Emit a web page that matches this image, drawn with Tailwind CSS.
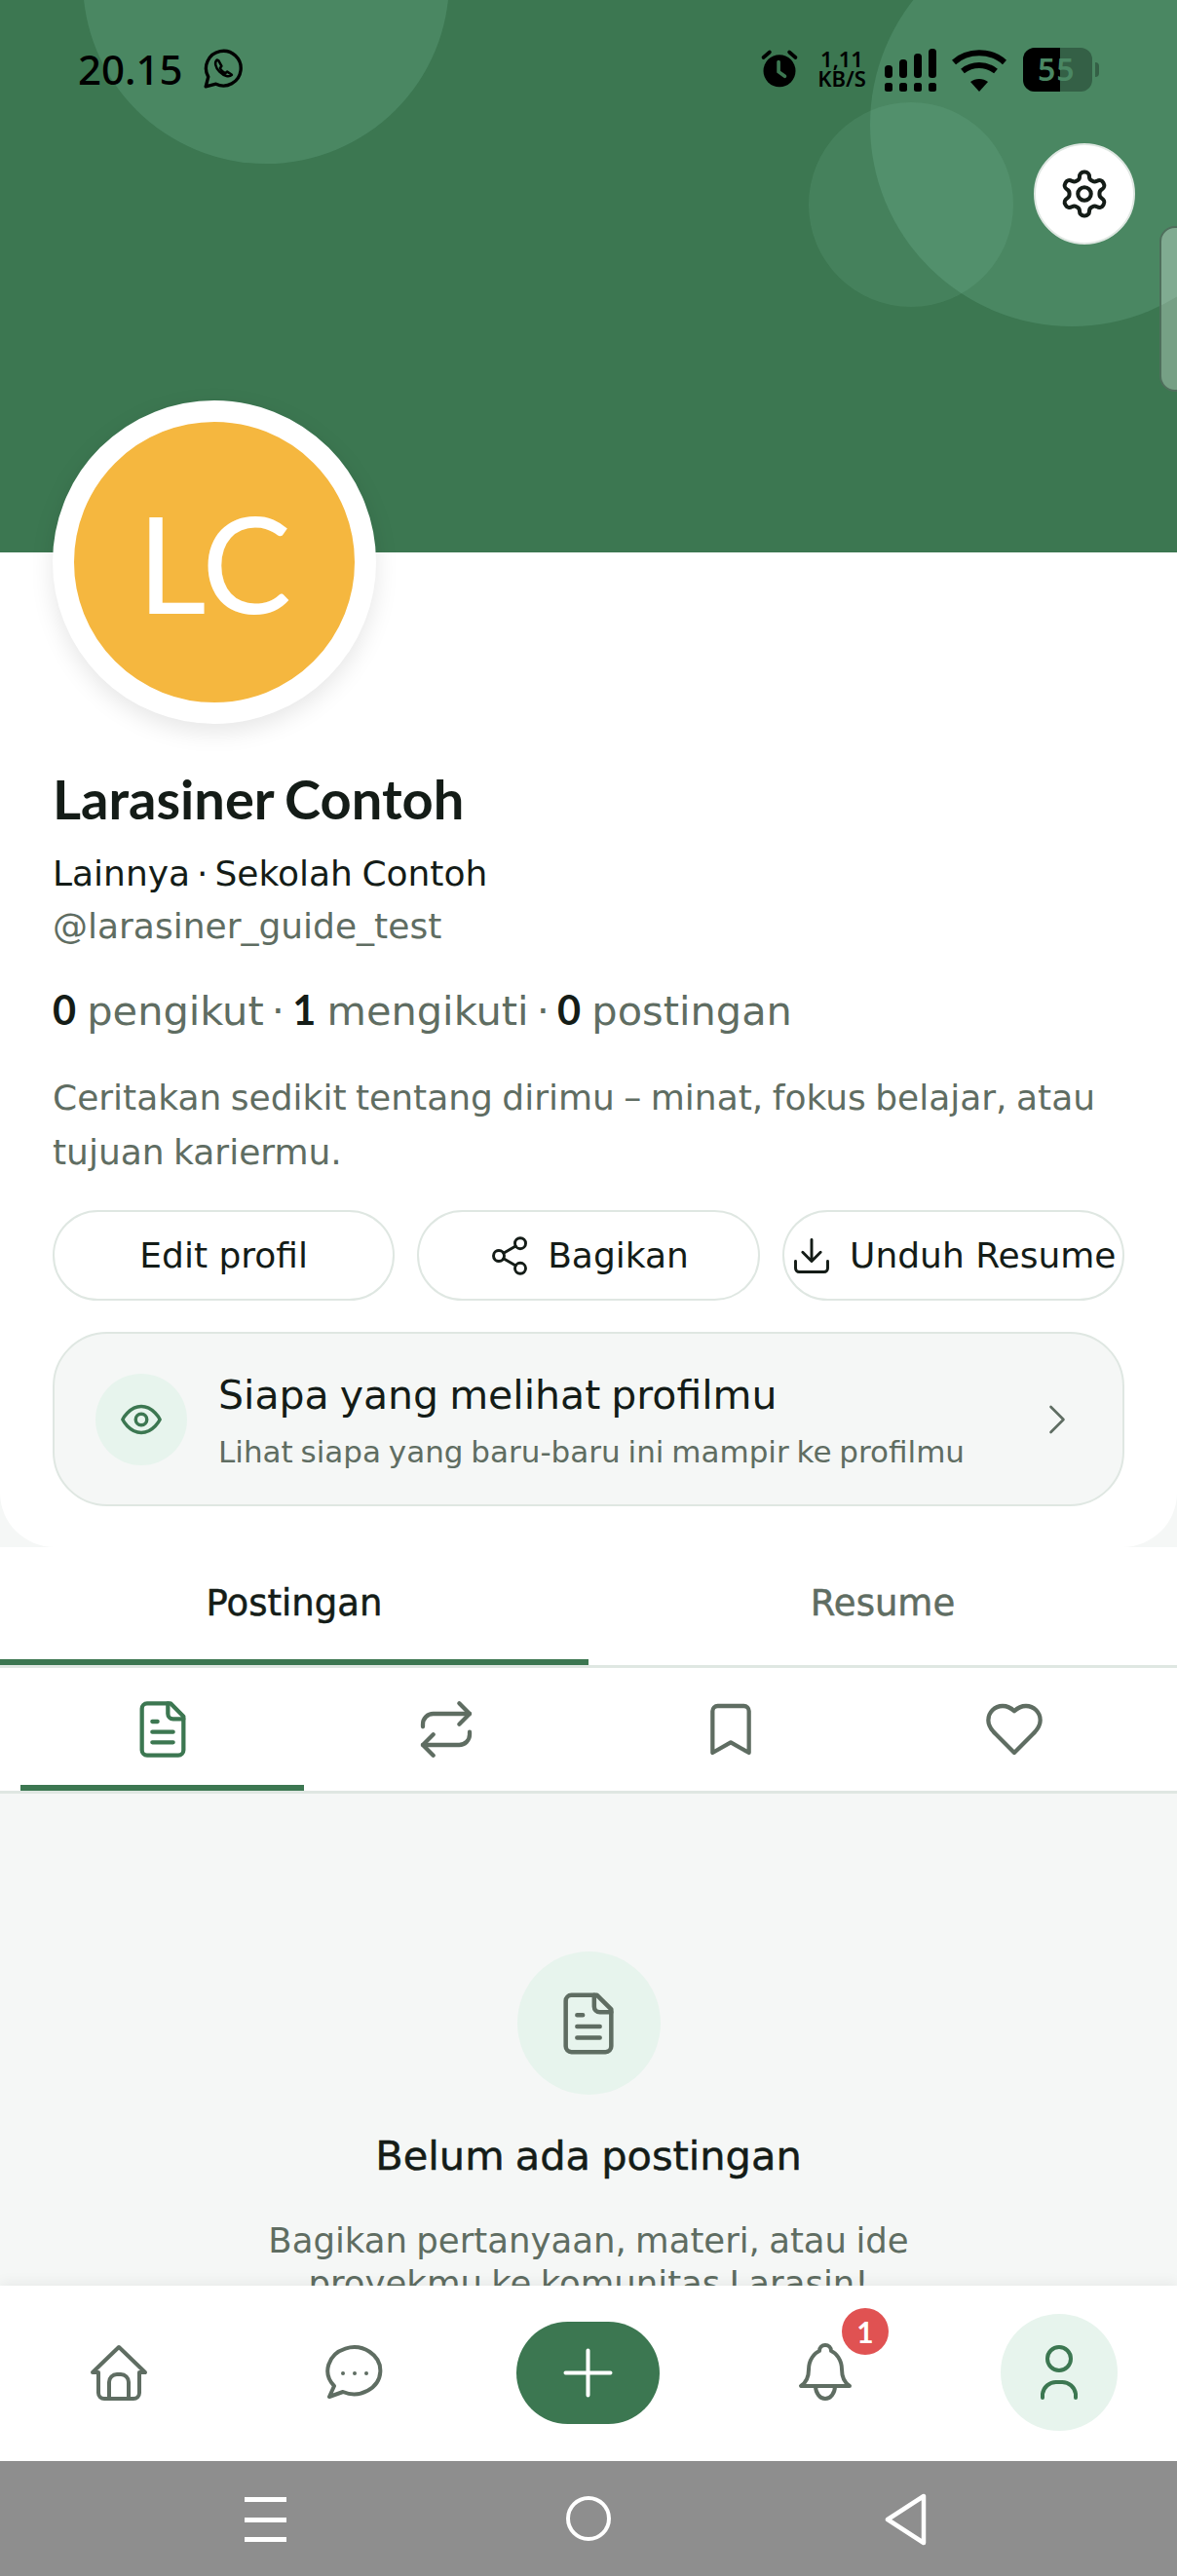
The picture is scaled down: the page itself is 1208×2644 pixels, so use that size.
<!doctype html>
<html lang="id"><head><meta charset="utf-8"><script src="https://cdn.jsdelivr.net/npm/@tailwindcss/browser@4"></script></head>
<body class="m-0">
<div class="relative flex h-[2644px] w-[1208px] flex-col overflow-hidden bg-[#f5f7f6] font-['DejaVu_Sans',sans-serif] text-[#141c17] [word-spacing:-2px]">
  <header class="relative h-[567px] shrink-0 overflow-hidden bg-[#3c7751]">
    <div class="absolute left-[85px] top-[-208px] size-[376px] rounded-full bg-[#99e2c9]/[0.15]"></div>
    <div class="absolute left-[893px] top-[-79px] size-[414px] rounded-full bg-[#99e2c9]/[0.15]"></div>
    <div class="absolute left-[830px] top-[105px] size-[210px] rounded-full bg-[#99e2c9]/[0.10]"></div>
    <div class="absolute left-[1190px] top-[232px] h-[170px] w-[40px] rounded-l-[16px] border-2 border-[#4f6f5c] bg-white/30"></div>
    <div class="absolute left-[80px] right-0 top-[46px] flex h-[50px] items-center text-black">
      <span class="font-['Noto_Sans',sans-serif] text-[42px] font-medium leading-[50px]">20.15</span>
      <svg class="ml-[20px] size-[42px]" viewBox="0 0 40 40" fill="none" stroke="#000" stroke-width="3.200" stroke-linecap="round" stroke-linejoin="round"><path d="M3 37l2.500-9.500A17 17 0 1 1 13 34.500z"/><path d="M14 11c-2.500 2-2 7 2.500 11.500S26 28 28.500 25.500l-4.500-3-2 1.500c-2-1-4-3-5-5l1.500-2-3-5.500z" stroke-width="2.400"/></svg>
      <svg class="absolute left-[698px] top-[2px] size-[44px]" viewBox="0 0 24 24"><circle cx="12" cy="13.500" r="9" fill="#000"/><path d="M3 6l3.500-3M21 6l-3.500-3" stroke="#000" stroke-width="2" stroke-linecap="round"/><path d="M11.500 8.500v5.500l3.500 2.500" stroke="#3c7751" stroke-width="2" fill="none" stroke-linecap="round"/></svg>
      <div class="absolute left-[752px] top-[4px] w-[64px] text-center font-['Noto_Sans',sans-serif] text-[22px] font-semibold leading-[20px]">1,11<br>KB/S</div>
      <svg class="absolute left-[828px] top-[4px] h-[44px] w-[54px]" viewBox="0 0 54 44" fill="#000"><rect x="0" y="17" width="8" height="13" rx="3.500"/><rect x="15" y="11" width="8" height="19" rx="3.500"/><rect x="30" y="5" width="8" height="25" rx="3.500"/><rect x="45" y="0" width="8" height="30" rx="3.500"/><rect x="0" y="35" width="8" height="9" rx="2.500"/><rect x="15" y="35" width="8" height="9" rx="2.500"/><rect x="30" y="35" width="8" height="9" rx="2.500"/><rect x="45" y="35" width="8" height="9" rx="2.500"/></svg>
      <svg class="absolute left-[897px] top-[4px] h-[44px] w-[56px]" viewBox="0 0 56 44" fill="none" stroke="#000" stroke-width="6"><path d="M2 14C16 1 40 1 54 14"/><path d="M11 23c10-8 24-8 34 0"/><path d="M28 44l-9-10c5-4 13-4 18 0z" fill="#000" stroke="none"/></svg>
      <div class="absolute left-[970px] top-[3px] flex h-[45px] w-[71px] overflow-hidden rounded-[12px] bg-[#346046]">
        <div class="h-full w-[38px] bg-black"></div>
        <span class="absolute left-[15px] top-[-1px] font-['Noto_Sans',sans-serif] text-[32px] font-semibold leading-[45px] text-[#4a8763] tracking-[1px]">55</span>
      </div>
      <div class="absolute left-[1044px] top-[18px] h-[15px] w-[4px] rounded-r-full bg-[#346046]"></div>
    </div>
    <button class="absolute left-[1061px] top-[147px] flex size-[104px] items-center justify-center rounded-full border-2 border-[#dfe7e2] bg-white">
      <svg class="size-[54px]" viewBox="0 0 24 24" fill="none" stroke="#141c17" stroke-width="1.800" stroke-linecap="round" stroke-linejoin="round"><path d="M12.220 2h-.44a2 2 0 0 0-2 2v.18a2 2 0 0 1-1 1.730l-.43.25a2 2 0 0 1-2 0l-.15-.08a2 2 0 0 0-2.730.73l-.22.38a2 2 0 0 0 .73 2.730l.15.100a2 2 0 0 1 1 1.720v.51a2 2 0 0 1-1 1.740l-.15.090a2 2 0 0 0-.73 2.730l.22.38a2 2 0 0 0 2.730.73l.15-.08a2 2 0 0 1 2 0l.43.25a2 2 0 0 1 1 1.730V20a2 2 0 0 0 2 2h.44a2 2 0 0 0 2-2v-.18a2 2 0 0 1 1-1.730l.43-.25a2 2 0 0 1 2 0l.15.080a2 2 0 0 0 2.730-.73l.22-.39a2 2 0 0 0-.73-2.730l-.15-.08a2 2 0 0 1-1-1.740v-.5a2 2 0 0 1 1-1.740l.15-.09a2 2 0 0 0 .73-2.730l-.22-.38a2 2 0 0 0-2.730-.73l-.15.08a2 2 0 0 1-2 0l-.43-.25a2 2 0 0 1-1-1.730V4a2 2 0 0 0-2-2z"/><circle cx="12" cy="12" r="3"/></svg>
    </button>
  </header>

  <section class="relative h-[1021px] shrink-0 rounded-b-[56px] bg-white px-[54px]">
    <div class="absolute left-[54px] top-[-156px] flex size-[332px] items-center justify-center rounded-full border-[22px] border-white bg-[#f5b73f] shadow-[0_8px_24px_rgba(0,0,0,0.10)]">
      <span class="font-['Lato',sans-serif] text-[138px] leading-none text-white">LC</span>
    </div>
    <div class="pt-[223px]">
      <h1 class="font-['Lato',sans-serif] text-[56px] font-bold leading-[60px]">Larasiner Contoh</h1>
      <p class="mt-[21px] text-[36px] leading-[52px]">Lainnya<span class="[word-spacing:-4.500px]"> · </span>Sekolah Contoh</p>
      <p class="mt-[2px] text-[36px] leading-[52px] text-[#5f6d62]">@larasiner_guide_test</p>
      <p class="mt-[31px] text-[41.500px] leading-[56px] text-[#5f6d62]"><b class="font-['Lato',sans-serif] text-[#141c17]">0</b> pengikut<span class="[word-spacing:-5px]"> · </span><b class="font-['Lato',sans-serif] text-[#141c17]">1</b> mengikuti<span class="[word-spacing:-5px]"> · </span><b class="font-['Lato',sans-serif] text-[#141c17]">0</b> postingan</p>
      <p class="mt-[33px] text-[36px] leading-[56px] text-[#5f6d62]">Ceritakan sedikit tentang dirimu – minat, fokus belajar, atau tujuan kariermu.</p>
    </div>
    <div class="mt-[31px] flex gap-[23px]">
      <button class="flex h-[93px] w-[352px] items-center justify-center rounded-full border-2 border-[#dfe7e2] text-[36px]">Edit profil</button>
      <button class="flex h-[93px] w-[352px] items-center justify-center gap-[17px] rounded-full border-2 border-[#dfe7e2] text-[36px]">
        <svg class="size-[44px]" viewBox="0 0 24 24" fill="none" stroke="#141c17" stroke-width="1.600" stroke-linecap="round"><circle cx="18" cy="5" r="3"/><circle cx="6" cy="12" r="3"/><circle cx="18" cy="19" r="3"/><path d="m8.590 13.510 6.830 3.980M15.410 6.510l-6.820 3.980"/></svg>Bagikan</button>
      <button class="flex h-[93px] w-[352px] items-center justify-center gap-[17px] overflow-hidden rounded-full border-2 border-[#dfe7e2] text-[36px] whitespace-nowrap">
        <svg class="size-[44px] shrink-0" viewBox="0 0 24 24" fill="none" stroke="#141c17" stroke-width="1.600" stroke-linecap="round" stroke-linejoin="round"><path d="M21 15v4a2 2 0 0 1-2 2H5a2 2 0 0 1-2-2v-4M7 10l5 5 5-5M12 15V3"/></svg>Unduh Resume</button>
    </div>
    <a class="mt-[32px] flex h-[179px] items-center rounded-[56px] border-2 border-[#dfe7e2] bg-[#f5f7f6] pl-[42px] pr-[41px]">
      <span class="flex size-[94px] shrink-0 items-center justify-center rounded-full bg-[#e7f4ed]">
        <svg class="size-[46px]" viewBox="0 0 24 24" fill="none" stroke="#3c7751" stroke-width="1.800" stroke-linecap="round" stroke-linejoin="round"><path d="M2 12s3.500-7 10-7 10 7 10 7-3.500 7-10 7-10-7-10-7z"/><circle cx="12" cy="12" r="3"/></svg>
      </span>
      <span class="ml-[32px] flex-1 pt-[3px]">
        <span class="block text-[41px] leading-[52px]">Siapa yang melihat profilmu</span>
        <span class="mt-[12px] block text-[31px] leading-[40px] text-[#5f6d62]">Lihat siapa yang baru-baru ini mampir ke profilmu</span>
      </span>
      <svg class="size-[52px]" viewBox="0 0 24 24" fill="none" stroke="#5f6d62" stroke-width="1.200" stroke-linecap="round" stroke-linejoin="round"><path d="m9 18 6-6-6-6"/></svg>
    </a>
  </section>

  <nav class="grid h-[124px] shrink-0 grid-cols-2 border-b-[3px] border-[#dfe7e2] bg-white text-center text-[37px] [-webkit-text-stroke:0.5px]">
    <div class="relative flex items-center justify-center pb-[6px]">Postingan<span class="absolute inset-x-0 bottom-0 h-[6px] bg-[#3c7751]"></span></div>
    <div class="flex items-center justify-center pb-[6px] text-[#5f6d62]">Resume</div>
  </nav>
  <nav class="grid h-[129px] shrink-0 grid-cols-4 border-b-[3px] border-[#dfe7e2] bg-white px-[21px]">
    <div class="relative flex items-center justify-center"><svg class="size-[64px]" viewBox="0 0 24 24" fill="none" stroke="#3c7751" stroke-width="1.600" stroke-linecap="round" stroke-linejoin="round"><path d="M15 2H6a2 2 0 0 0-2 2v16a2 2 0 0 0 2 2h12a2 2 0 0 0 2-2V7z"/><path d="M14 2v4a2 2 0 0 0 2 2h4M10 9H8M16 13H8M16 17H8"/></svg><span class="absolute bottom-0 left-0 right-[1px] h-[6px] bg-[#3c7751]"></span></div>
    <div class="flex items-center justify-center"><svg class="size-[64px]" viewBox="0 0 24 24" fill="none" stroke="#5f6d62" stroke-width="1.600" stroke-linecap="round" stroke-linejoin="round"><path d="m17 2 4 4-4 4"/><path d="M3 11v-1a4 4 0 0 1 4-4h14"/><path d="m7 22-4-4 4-4"/><path d="M21 13v1a4 4 0 0 1-4 4H3"/></svg></div>
    <div class="flex items-center justify-center"><svg class="size-[64px]" viewBox="0 0 24 24" fill="none" stroke="#5f6d62" stroke-width="1.600" stroke-linecap="round" stroke-linejoin="round"><path d="m19 21-7-4-7 4V5a2 2 0 0 1 2-2h10a2 2 0 0 1 2 2z"/></svg></div>
    <div class="flex items-center justify-center"><svg class="size-[64px]" viewBox="0 0 24 24" fill="none" stroke="#5f6d62" stroke-width="1.600" stroke-linecap="round" stroke-linejoin="round"><path d="M19 14c1.490-1.460 3-3.210 3-5.500A5.500 5.500 0 0 0 16.500 3c-1.760 0-3 .5-4.500 2-1.500-1.500-2.740-2-4.500-2A5.500 5.500 0 0 0 2 8.500c0 2.300 1.500 4.050 3 5.500l7 7z"/></svg></div>
  </nav>

  <main class="flex min-h-0 flex-1 flex-col items-center overflow-hidden pt-[162px] text-center">
    <span class="flex size-[147px] shrink-0 items-center justify-center rounded-full bg-[#e7f4ed]"><svg class="size-[70px]" viewBox="0 0 24 24" fill="none" stroke="#5f6d62" stroke-width="1.550" stroke-linecap="round" stroke-linejoin="round"><path d="M15 2H6a2 2 0 0 0-2 2v16a2 2 0 0 0 2 2h12a2 2 0 0 0 2-2V7z"/><path d="M14 2v4a2 2 0 0 0 2 2h4M10 9H8M16 13H8M16 17H8"/></svg></span>
    <h2 class="mt-[38px] shrink-0 text-[41.500px] leading-[50px] [-webkit-text-stroke:0.5px]">Belum ada postingan</h2>
    <p class="mt-[40px] w-[760px] shrink-0 text-[35.500px] leading-[44px] text-[#5f6d62]">Bagikan pertanyaan, materi, atau ide proyekmu ke komunitas Larasin!</p>
  </main>

  <footer class="relative h-[180px] shrink-0 bg-white shadow-[0_-4px_12px_rgba(0,0,0,0.05)]">
    <svg class="absolute left-[92px] top-[60px] size-[60px]" viewBox="0 0 60 60" fill="none" stroke="#5f6d62" stroke-width="4" stroke-linecap="round" stroke-linejoin="round"><path d="M3 29 30 3l27 26h-6v21a6 6 0 0 1-6 6H15a6 6 0 0 1-6-6V29z"/><path d="M20 56V39a8 8 0 0 1 8-8h4a8 8 0 0 1 8 8v17"/></svg>
    <svg class="absolute left-[334px] top-[60px] size-[60px]" viewBox="0 0 60 60" fill="none" stroke="#5f6d62" stroke-width="4" stroke-linecap="round" stroke-linejoin="round"><path d="M9 43 4 54l14-5A27 24 0 1 0 9 43z"/><circle cx="18" cy="30" r="2" fill="#5f6d62" stroke="none"/><circle cx="30" cy="30" r="2" fill="#5f6d62" stroke="none"/><circle cx="42" cy="30" r="2" fill="#5f6d62" stroke="none"/></svg>
    <div class="absolute left-[530px] top-[37px] flex h-[105px] w-[147px] items-center justify-center rounded-full bg-[#3c7751]"><svg class="size-[69px]" viewBox="0 0 24 24" fill="none" stroke="#fff" stroke-width="1.400" stroke-linecap="round"><path d="M4 12h16M12 4v16"/></svg></div>
    <svg class="absolute left-[817px] top-[59px] size-[60px]" viewBox="0 0 60 60" fill="none" stroke="#5f6d62" stroke-width="4" stroke-linecap="round" stroke-linejoin="round"><path d="M5 44h50c-6-4-8-10-8-17 0-10-6-17-11-19a6 6 0 0 0-12 0c-5 2-11 9-11 19 0 7-2 13-8 17z"/><path d="M20 44a10 13 0 0 0 20 0"/></svg>
    <span class="absolute left-[864px] top-[23px] flex size-[48px] items-center justify-center rounded-full bg-[#e05252] font-['Lato',sans-serif] text-[30px] font-bold text-white">1</span>
    <div class="absolute left-[1027px] top-[29px] flex size-[120px] items-center justify-center rounded-full bg-[#e7f4ed]"><svg class="size-[60px]" viewBox="0 0 60 60" fill="none" stroke="#3c7751" stroke-width="4" stroke-linecap="round" stroke-linejoin="round"><circle cx="30" cy="16" r="12"/><path d="M13 56v-4a14 14 0 0 1 14-12h6a14 14 0 0 1 14 12v4"/></svg></div>
  </footer>

  <div class="relative h-[118px] shrink-0 bg-[#8e8e8e]">
    <div class="absolute left-[251px] top-[37px] flex h-[46px] w-[43px] flex-col justify-between"><i class="block h-[5px] bg-white"></i><i class="block h-[5px] bg-white"></i><i class="block h-[5px] bg-white"></i></div>
    <div class="absolute left-[581px] top-[36px] size-[46px] rounded-full border-[4px] border-white"></div>
    <svg class="absolute left-[906px] top-[33px] h-[54px] w-[46px]" viewBox="0 0 46 54" fill="none" stroke="#fff" stroke-width="4.500" stroke-linejoin="round"><path d="M42 3v48L5 27z"/></svg>
  </div>
</div>
</body></html>
